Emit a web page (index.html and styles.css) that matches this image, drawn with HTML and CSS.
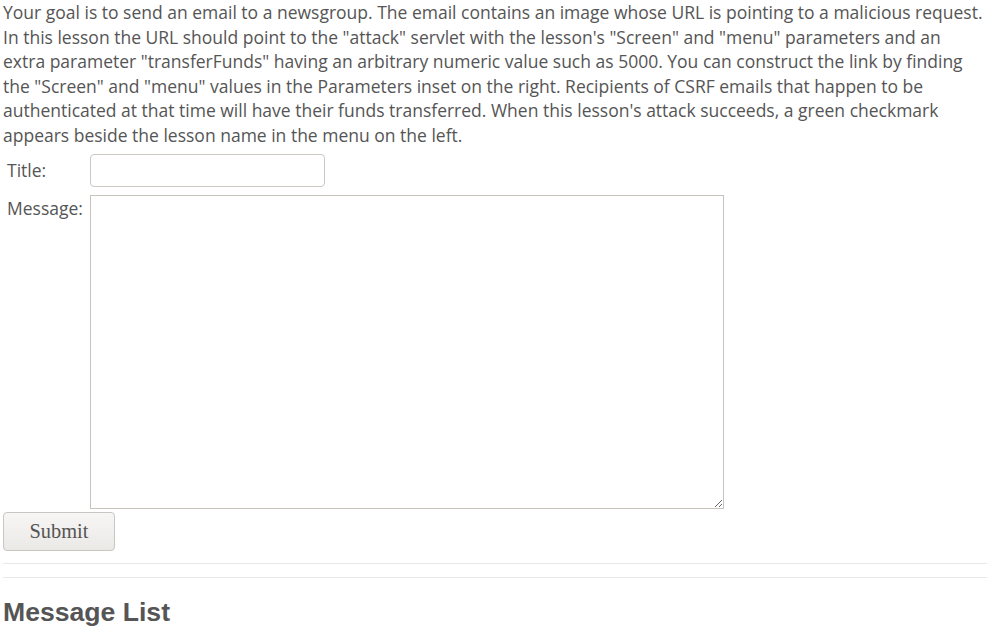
FILE: index.html
```html
<!DOCTYPE html>
<html>
<head>
<meta charset="utf-8">
<link rel="stylesheet" href="styles.css">
</head>
<body>
<div class="page">
  <p class="intro">Your goal is to send an email to a newsgroup. The email contains an image whose URL is pointing to a malicious request. In this lesson the URL should point to the "attack" servlet with the lesson's "Screen" and "menu" parameters and an extra parameter "transferFunds" having an arbitrary numeric value such as 5000. You can construct the link by finding the "Screen" and "menu" values in the Parameters inset on the right. Recipients of CSRF emails that happen to be authenticated at that time will have their funds transferred. When this lesson's attack succeeds, a green checkmark appears beside the lesson name in the menu on the left.</p>
  <form class="form">
    <div class="row row-title">
      <label class="lbl">Title:</label>
      <input class="title-input" type="text">
    </div>
    <div class="row row-msg">
      <label class="lbl">Message:</label>
      <textarea class="msg"></textarea>
    </div>
    <button type="button" class="submit">Submit</button>
  </form>
  <hr class="rule">
  <hr class="rule rule2">
  <h3 class="list-title">Message List</h3>
</div>
</body>
</html>
```

FILE: styles.css
```css
html, body { margin: 0; padding: 0; background: #fff; }
.page {
  padding: 0 5px 0 3px;
  font-family: "Open Sans", sans-serif;
  color: #555;
}
.intro {
  margin: 0;
  font-size: 17.5px;
  line-height: 24.6px;
}
.form { margin-top: 6px; }
.row { display: flex; }
.row-title { align-items: center; height: 33px; }
.row-msg { margin-top: 8px; align-items: flex-start; }
.lbl {
  width: 83px;
  padding-left: 4px;
  font-size: 17.5px;
  line-height: 24px;
}
.row-msg .lbl { padding-top: 1px; }
.title-input {
  box-sizing: border-box;
  width: 235px;
  height: 33px;
  margin: 0;
  border: 1px solid #cdc8c2;
  border-radius: 4px;
  background: #fff;
}
.msg {
  box-sizing: border-box;
  width: 634px;
  height: 314px;
  margin: 0;
  border: 1px solid #c8c3bc;
  border-radius: 0;
  resize: both;
}
.submit {
  display: block;
  margin-top: 3px;
  box-sizing: border-box;
  width: 112px;
  height: 39px;
  border: 1px solid #c9c5c0;
  border-radius: 4px;
  background: linear-gradient(#f7f6f5, #ebe9e6);
  font-family: "Liberation Serif", serif;
  font-size: 20.4px;
  color: #555;
  padding: 0;
}
.rule {
  margin: 12px 0 0 0;
  border: 0;
  border-top: 1px solid #e8e8e8;
  height: 0;
}
.rule2 { margin-top: 13px; }
.list-title {
  margin: 19px 0 0 0;
  font-family: "Liberation Sans", Arial, sans-serif;
  font-size: 26.6px;
  font-weight: bold;
  color: #555;
  line-height: 30px;
}
```
